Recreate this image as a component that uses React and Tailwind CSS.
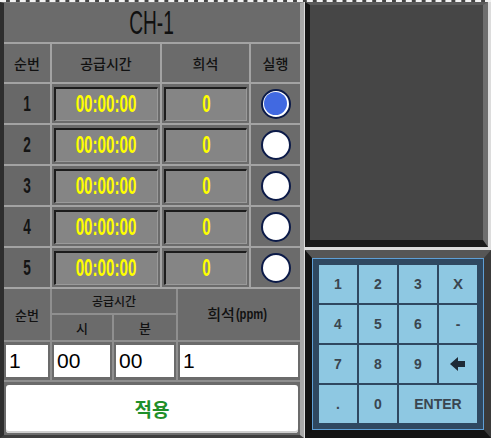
const ko = "font-['Noto_Sans_CJK_KR','Noto_Sans',sans-serif]";
const lat = "font-['Liberation_Sans',Arial,sans-serif]";

const rows = [1, 2, 3, 4, 5];

function Radio({ on }) {
  return (
    <div className="flex h-[30px] w-[30px] items-center justify-center rounded-full border-2 border-[#0b1a48] bg-white">
      {on && <div className="h-[23px] w-[23px] rounded-full bg-[#4169e1]" />}
    </div>
  );
}

function Display({ children }) {
  return (
    <div className="flex h-[34px] w-full items-center justify-center border-t-2 border-l-2 border-b border-r border-t-[#1c1c1c] border-l-[#1c1c1c] border-b-[#9a9a9a] border-r-[#9a9a9a] bg-[#858585]">
      <span className={`inline-block scale-x-[0.66] text-[23px] font-bold leading-none text-[#ffff00] ${lat}`}>
        {children}
      </span>
    </div>
  );
}

function Cell({ children, className = "" }) {
  return (
    <div className={`flex items-center justify-center bg-[#6b6b6b] ${className}`}>{children}</div>
  );
}

function BackArrow() {
  return (
    <svg width="16" height="14" viewBox="0 0 16 14">
      <path d="M0 7 L8 0 L8 4 L15 4 L15 10 L8 10 L8 14 Z" fill="#1e2a36" />
    </svg>
  );
}

function Key({ children, className = "" }) {
  return (
    <div
      className={`flex h-[38px] items-center justify-center bg-[#8ec8e2] text-[14px] font-bold text-[#3a4650] ${lat} ${className}`}
    >
      {children}
    </div>
  );
}

function LeftPanel() {
  return (
    <div className="flex w-[304px] flex-col border-l-4 border-r-4 border-b-[3px] border-t border-l-[#2e2e2e] border-r-[#a8a8a8] border-b-[#3e3e3e] border-t-[#7a7a7a] bg-[#a5a5a5]">
      <div className="grid grid-cols-[46px_108px_87px_49px] gap-[2px] bg-[#a3a3a3]">
        <Cell className="col-span-4 h-[39px]">
          <span className={`inline-block scale-x-[0.58] text-[33px] leading-none text-[#101010] ${lat}`}>CH-1</span>
        </Cell>
        {["순번", "공급시간", "희석", "실행"].map((t) => (
          <Cell key={t} className={`h-[38px] text-[14px] font-medium text-[#111] ${ko}`}>
            {t}
          </Cell>
        ))}
        {rows.map((n) => (
          <div key={n} className="contents">
            <Cell className="h-[39px] bg-[#686868]">
              <span className={`inline-block scale-x-[0.62] text-[22px] font-bold leading-none text-[#141414] ${lat}`}>
                {n}
              </span>
            </Cell>
            <Cell className="h-[39px] px-[2px]">
              <Display>00:00:00</Display>
            </Cell>
            <Cell className="h-[39px] px-[2px]">
              <Display>0</Display>
            </Cell>
            <Cell className="h-[39px]">
              <Radio on={n === 1} />
            </Cell>
          </div>
        ))}
      </div>

      <div className="mt-[2px] grid flex-1 grid-cols-[46px_60px_62px_122px] grid-rows-[24px_25px_38px_1fr] gap-[2px] bg-[#8f8f8f]">
        <Cell className={`row-span-2 text-[13px] font-medium text-[#111] ${ko}`}>순번</Cell>
        <Cell className={`col-span-2 text-[12px] font-medium text-[#111] ${ko}`}>공급시간</Cell>
        <Cell className={`row-span-2 text-[15px] font-medium text-[#111] ${ko}`}>
          희석
          <span className={`inline-block -ml-[3px] scale-x-[0.8] text-[14px] font-bold ${lat}`}>(ppm)</span>
        </Cell>
        <Cell className={`text-[13px] font-medium text-[#111] ${ko}`}>시</Cell>
        <Cell className={`text-[13px] font-medium text-[#111] ${ko}`}>분</Cell>

        {["1", "00", "00", "1"].map((v, i) => (
          <Cell key={i} className="items-stretch px-[2px] pt-[3px] pb-[3px]">
            <div className={`flex w-full items-center bg-white pl-[3px] text-[21px] text-black ${lat}`}>{v}</div>
          </Cell>
        ))}

        <Cell className="col-span-4 items-stretch px-[2px] pt-[3px] pb-[2px]">
          <div className="flex w-full items-center justify-center rounded-[3px] bg-white shadow-[inset_0_-2px_0_#cfcfcf]">
            <span className={`text-[19px] font-bold text-[#1f8f2a] ${ko}`}>적용</span>
          </div>
        </Cell>
      </div>
    </div>
  );
}

export default function App() {
  return (
    <div className="flex h-[438px] w-[491px] flex-col overflow-hidden bg-[#dcdcdc]">
      <div className="h-[2px] border-t-2 border-dashed border-t-[#f2f2f2] bg-[#444]" />
      <div className="flex flex-1">
        <LeftPanel />
        <div className="flex flex-1 flex-col gap-[3px] pl-[1px]">
          <div className="mr-[3px] h-[245px] border-l-[5px] border-t-[3px] border-r-[5px] border-b-[7px] border-l-[#161616] border-t-[#5a5a5a] border-r-[#6e6e6e] border-b-[#1a1a1a] bg-[#464646]" />
          <div className="flex flex-1 flex-col border-l-[7px] border-t-[8px] border-r-[7px] border-b-[8px] border-l-[#121212] border-t-[#565656] border-r-[#3a3a3a] border-b-[#141414] bg-[#2f4860]">
            <div className="flex flex-1 border border-[#5e9fd6] p-[6px]">
              <div className="grid flex-1 grid-cols-4 content-start gap-[2px]">
                <Key>1</Key>
                <Key>2</Key>
                <Key>3</Key>
                <Key className="text-[15px]">X</Key>
                <Key>4</Key>
                <Key>5</Key>
                <Key>6</Key>
                <Key>-</Key>
                <Key>7</Key>
                <Key>8</Key>
                <Key>9</Key>
                <Key>
                  <BackArrow />
                </Key>
                <Key>.</Key>
                <Key>0</Key>
                <Key className="col-span-2 text-[9px]">ENTER</Key>
              </div>
            </div>
          </div>
        </div>
      </div>
    </div>
  );
}
